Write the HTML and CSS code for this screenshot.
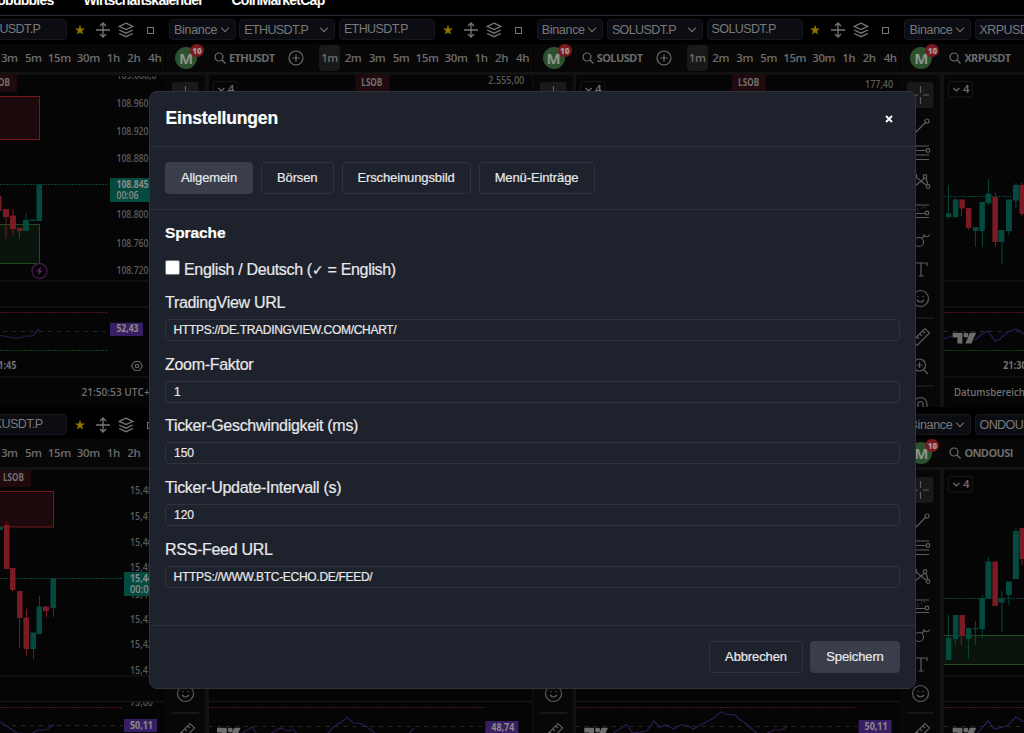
FILE: index.html
```html
<!DOCTYPE html>
<html lang="de">
<head>
<meta charset="utf-8">
<title>Einstellungen</title>
<link rel="stylesheet" href="styles.css">
</head>
<body>
<svg class="defs" width="0" height="0" aria-hidden="true">
  <symbol id="move" viewBox="0 0 16 16"><path d="M8 1v14M1 8h14M5 4l3-3 3 3M5 12l3 3 3-3" /></symbol>
  <symbol id="layers" viewBox="0 0 16 16"><path d="M8 1.200l6.800 3.200L8 7.600 1.200 4.400zM1.200 8L8 11.200l6.800-3.200M1.200 11.500L8 14.700l6.800-3.200" /></symbol>
  <symbol id="star" viewBox="0 0 12 12"><path d="M6 .8l1.300 3.600 3.700.1-2.900 2.300 1 3.700L6 8.400l-3.100 2.100 1-3.700L1 4.500l3.700-.1z" /></symbol>
  <symbol id="search" viewBox="0 0 12 12"><circle cx="5" cy="5" r="4"/><path d="M8 8l3.500 3.500"/></symbol>
  <symbol id="plus" viewBox="0 0 16 16"><circle cx="8" cy="8" r="7"/><path d="M8 4.500v7M4.500 8h7"/></symbol>
  <symbol id="logo" viewBox="0 0 24 12"><path d="M0 0h10v11H5V5H0zM17.500 0h6.500l-5 11h-6z"/><circle cx="13.500" cy="2.500" r="2.500"/></symbol>
  <symbol id="tools" viewBox="0 0 40 332">
    <rect class="on" x="7" y="7" width="26.500" height="26" rx="3"/>
    <path d="M20.500 11v7M20.500 22v7M12 20h6M23 20h6"/>
    <path d="M13 60l12.500-12.500"/><circle cx="27" cy="46.500" r="2" transform="translate(0 -.5)"/>
    <path d="M12 71h17M12 75.500h14M12 80h17M12 84.500h17"/><circle cx="28" cy="75.500" r="1.800"/>
    <path d="M16 102l10 8M25 103l-10 8M26 103l2 7M15 103l-1 7"/><circle cx="15" cy="101" r="1.800"/><circle cx="25" cy="101.500" r="1.800"/><circle cx="28" cy="111.500" r="1.800"/><circle cx="13.500" cy="111.500" r="1.800"/>
    <path d="M12 130h17M12 138.500h13M12 142.500h17M17 134h1M21 133h1M24 132h1M18 136h1"/><circle cx="27" cy="138" r="1.800"/>
    <circle cx="19" cy="167" r="4.500"/><path d="M22 163.500c1-1 2-2 2-4 1 3 4 3 6 0"/>
    <path d="M15 191v-3h12v3M21 188v13M18.500 201h5"/>
    <circle cx="20.500" cy="223.500" r="8"/><path d="M17 225q3.500 4 7 0M18 221v1M23 221v1"/>
    <path class="rule" d="M7 243h27"/>
    <path d="M12.500 266L25 253.500l4.500 4.500L17 270.500zM20 259l2 2M23 256l2 2M17 262l2 2"/>
    <circle cx="19.500" cy="290" r="6"/><path d="M24 295l4 4M16.500 290h6M19.500 287v6"/>
    <path class="rule" d="M7 311h27"/>
    <path d="M14 337v-8a6 6 0 0 1 13 0v8M18 337v-8a2.500 2.500 0 0 1 5 0v8"/>
  </symbol>
</svg>

<nav class="topnav"><span class="n1">Cryptobubbles</span><span class="n2">Wirtschaftskalender</span><span class="n3">CoinMarketCap</span></nav>

<main class="workspace">
  <section class="panel">
    <div class="pick"><span class="sel ex">Binance</span><span class="sel sym">BTCUSDT.P</span><span class="inp">BTCUSDT.P</span><svg class="i-star"><use href="#star"/></svg><svg class="i-move"><use href="#move"/></svg><svg class="i-layers"><use href="#layers"/></svg><i class="sq"></i></div>
    <div class="bar"><span class="ava">M<b>10</b></span><svg class="i-search"><use href="#search"/></svg><strong>BTCUSDT</strong><svg class="i-plus"><use href="#plus"/></svg><span class="tf on">1m</span><span class="tf">2m</span><span class="tf">3m</span><span class="tf">5m</span><span class="tf w28">15m</span><span class="tf w30">30m</span><span class="tf w20">1h</span><span class="tf w21">2h</span><span class="tf w21">4h</span></div>
    <div class="body">
      <svg class="tools"><use href="#tools"/></svg>
      <svg class="chart" viewBox="-159 75 323.700 332">
        <path class="tag" d="M-17 75h34v15q0 2-2 2h-32z"/><text class="b" x="-11" y="86" textLength="21" lengthAdjust="spacingAndGlyphs">LSOB</text>
        <rect class="rbox" x="-60" y="96.500" width="99.500" height="43"/><rect class="gbox" x="-60" y="224.500" width="99.500" height="39"/>
        <path class="dot g" d="M-159 184.500H108"/>
        <path class="red" d="M-4 196h5.500v15H-4zM3 209h6v8H3zM5.500 217h1v22h-1zM10 215.500h6V229h-6zM12.500 209h1v26h-1zM17 228h5.500v3H17zM19 231h1v8h-1z"/>
        <path class="green" d="M23 220h6v11h-6zM25.500 213h1v8h-1zM30 219.500h5.500v1.500H30zM36.500 184.500h5.500v36.500h-5.500z"/>
        <circle class="bolt" cx="39.500" cy="271" r="7.500"/><path class="boltp" d="M41.500 266.500l-5.500 5h3l-1.500 4 5.500-5h-3z"/>
        <path class="rule" d="M-159 281H164M-159 307H164M-159 377H164"/>
        <text x="116.500" y="79" textLength="40" lengthAdjust="spacingAndGlyphs">109.000,0</text><rect class="mask" x="110" y="75" width="54" height="1"/>
        <text x="116.500" y="107.500" textLength="32" lengthAdjust="spacingAndGlyphs">108.960</text><text x="116.500" y="135" textLength="32" lengthAdjust="spacingAndGlyphs">108.920</text><text x="116.500" y="162.500" textLength="32" lengthAdjust="spacingAndGlyphs">108.880</text><text x="116.500" y="218.500" textLength="32" lengthAdjust="spacingAndGlyphs">108.800</text><text x="116.500" y="247" textLength="32" lengthAdjust="spacingAndGlyphs">108.760</text><text x="116.500" y="274.500" textLength="32" lengthAdjust="spacingAndGlyphs">108.720</text>
        <rect class="price" x="110" y="178" width="52" height="24"/><text class="b lt" x="116.500" y="188" textLength="32" lengthAdjust="spacingAndGlyphs">108.845</text><text class="lt" x="116.500" y="199" textLength="22" lengthAdjust="spacingAndGlyphs">00:06</text>
        <path class="dot r" d="M-159 312.500H108"/><path class="dash" d="M-159 331.500H108"/><path class="dot gr" d="M-159 350.500H108"/>
        <path class="osc" d="M-10 334l10 1.500 14 2.500h6l6-2h7l6-7"/>
        <rect class="purple" x="110" y="322.700" width="33" height="13.300"/><text class="b lt" x="116.500" y="332.500" textLength="22" lengthAdjust="spacingAndGlyphs">52,43</text>
        <text class="b" x="-7" y="369.500" textLength="23.500" lengthAdjust="spacingAndGlyphs">21:45</text><path class="hex" d="M134.500 361.500h5l3 4.500-3 4.500h-5l-3-4.500z"/><circle class="hex" cx="137" cy="366" r="1.700"/>
        <text class="b t11" x="81.500" y="396" textLength="74" lengthAdjust="spacingAndGlyphs">21:50:53 UTC+2</text>
      </svg>
    </div>
  </section>

  <section class="panel">
    <div class="pick"><span class="sel ex">Binance</span><span class="sel sym">ETHUSDT.P</span><span class="inp">ETHUSDT.P</span><svg class="i-star"><use href="#star"/></svg><svg class="i-move"><use href="#move"/></svg><svg class="i-layers"><use href="#layers"/></svg><i class="sq"></i></div>
    <div class="bar"><span class="ava">M<b>10</b></span><svg class="i-search"><use href="#search"/></svg><strong>ETHUSDT</strong><svg class="i-plus"><use href="#plus"/></svg><span class="tf on">1m</span><span class="tf">2m</span><span class="tf">3m</span><span class="tf">5m</span><span class="tf w28">15m</span><span class="tf w30">30m</span><span class="tf w20">1h</span><span class="tf w21">2h</span><span class="tf w21">4h</span></div>
    <div class="body">
      <svg class="tools"><use href="#tools"/></svg>
      <svg class="chart" viewBox="208.700 75 323.700 332">
        <rect class="cnt" x="213" y="81.500" width="24.500" height="15.500" rx="2"/><path class="chev" d="M218 88l3 3 3-3"/><text class="b t11" x="227.500" y="93">4</text>
        <path class="tag" d="M355 75h34v17h-34z"/><text class="b" x="361" y="86" textLength="21" lengthAdjust="spacingAndGlyphs">LSOB</text>
        <text x="488" y="84" textLength="36" lengthAdjust="spacingAndGlyphs">2.555,00</text>
      </svg>
    </div>
  </section>

  <section class="panel">
    <div class="pick"><span class="sel ex">Binance</span><span class="sel sym">SOLUSDT.P</span><span class="inp">SOLUSDT.P</span><svg class="i-star"><use href="#star"/></svg><svg class="i-move"><use href="#move"/></svg><svg class="i-layers"><use href="#layers"/></svg><i class="sq"></i></div>
    <div class="bar"><span class="ava">M<b>10</b></span><svg class="i-search"><use href="#search"/></svg><strong>SOLUSDT</strong><svg class="i-plus"><use href="#plus"/></svg><span class="tf on">1m</span><span class="tf">2m</span><span class="tf">3m</span><span class="tf">5m</span><span class="tf w28">15m</span><span class="tf w30">30m</span><span class="tf w20">1h</span><span class="tf w21">2h</span><span class="tf w21">4h</span></div>
    <div class="body">
      <svg class="tools"><use href="#tools"/></svg>
      <svg class="chart" viewBox="576.400 75 323.700 332">
        <rect class="cnt" x="581" y="81.500" width="24.500" height="15.500" rx="2"/><path class="chev" d="M586 88l3 3 3-3"/><text class="b t11" x="595.500" y="93">4</text>
        <path class="tag" d="M732 75h34v17h-34z"/><text class="b" x="738.500" y="86" textLength="21" lengthAdjust="spacingAndGlyphs">LSOB</text>
        <text x="865.500" y="88.500" textLength="28" lengthAdjust="spacingAndGlyphs">177,40</text>
      </svg>
    </div>
  </section>

  <section class="panel">
    <div class="pick"><span class="sel ex">Binance</span><span class="sel sym">XRPUSDT.P</span></div>
    <div class="bar"><span class="ava">M<b>10</b></span><svg class="i-search"><use href="#search"/></svg><strong>XRPUSDT</strong></div>
    <div class="body">
      <svg class="tools"><use href="#tools"/></svg>
      <svg class="chart" viewBox="944.100 75 323.700 332">
        <rect class="cnt" x="948.500" y="81.500" width="24" height="15.500" rx="2"/><path class="chev" d="M953.500 88l3 3 3-3"/><text class="b t11" x="963" y="93">4</text>
        <path class="dot g" d="M944 196.500h120"/>
        <path class="green" d="M946 213.500h5.500v3.500H946zM948 185h1v34h-1zM953 199.500h5.500V217H953zM955 198h1v20h-1zM973 227h5.500v4H973zM975 230h1v17h-1zM979.500 202h5.500v29h-5.500zM982 231h1v16h-1zM985.500 193.500h6v9.500h-6zM988 179h1v26h-1zM998.500 230h6v12h-6zM1001.500 242h1v22h-1zM1006 199.500h6v31.500h-6zM1008.500 231h1v4h-1zM1013 185h6v15.500h-6zM1015.500 183h1v25h-1z"/>
        <path class="red" d="M959.500 199.500h5.500v9h-5.500zM961 208h1v8h-1zM966 208h5.500v20H966zM968 228h1v2h-1zM992.500 197h5.500v45h-5.500zM995 193h1v54h-1zM1019.500 185h6v29h-6zM1021.500 182h1v34h-1z"/>
        <path class="rule" d="M944 281h120M944 307h120M944 377h120"/>
        <path class="dot r" d="M944 312.500h120"/><path class="dash" d="M944 331.500h120"/><path class="dot gr" d="M944 350.500h120"/>
        <path class="osc" d="M944 339l8-3M975 340l7-6 6-3 7 10 5-2 8-7 8-3 8 5"/>
        <use class="logo" href="#logo" x="952.500" y="332.500" width="24" height="12"/>
        <text class="b" x="1003" y="369.500" textLength="24" lengthAdjust="spacingAndGlyphs">21:30</text><text class="b t11" x="954" y="396" textLength="71" lengthAdjust="spacingAndGlyphs">Datumsbereich</text>
      </svg>
    </div>
  </section>

  <section class="panel">
    <div class="pick"><span class="sel ex">Binance</span><span class="sel sym">LINKUSDT.P</span><span class="inp">LINKUSDT.P</span><svg class="i-star"><use href="#star"/></svg><svg class="i-move"><use href="#move"/></svg><svg class="i-layers"><use href="#layers"/></svg><i class="sq"></i></div>
    <div class="bar"><span class="ava">M<b>10</b></span><svg class="i-search"><use href="#search"/></svg><strong>LINKUSDT</strong><svg class="i-plus"><use href="#plus"/></svg><span class="tf on">1m</span><span class="tf">2m</span><span class="tf">3m</span><span class="tf">5m</span><span class="tf w28">15m</span><span class="tf w30">30m</span><span class="tf w20">1h</span><span class="tf w21">2h</span></div>
    <div class="body">
      <svg class="tools"><use href="#tools"/></svg>
      <svg class="chart" viewBox="-159 470 323.700 332">
        <path class="tag" d="M-4 470h35v15q0 2-2 2H-4z"/><text class="b" x="3" y="481" textLength="21" lengthAdjust="spacingAndGlyphs">LSOB</text>
        <rect class="rbox" x="-60" y="491.500" width="113.500" height="35.500"/>
        <path class="dot g" d="M-159 578.500H123"/>
        <path class="red" d="M4 525h5.500v44H4zM6 521.500h1v6H6zM10 568h5.500v22H10zM12 590h1v1.500h-1zM17 591h5.500v27H17zM19 618h1v30h-1zM23.500 617.500H29V649h-5.500zM26 609h1v46.500h-1zM43 606.500h6v4.500h-6zM46 611h1v6h-1z"/>
        <path class="green" d="M-3 527h6v3h-6zM30.500 632.500h5.500V649h-5.500zM33 649h1v10h-1zM36.500 606.500H42V634h-5.500zM39 596h1v11h-1zM50.500 578.500h5.500V608h-5.500zM53 608h1v9h-1z"/>
        <text x="130" y="494.500" textLength="28" lengthAdjust="spacingAndGlyphs">15,480</text><text x="130" y="520" textLength="28" lengthAdjust="spacingAndGlyphs">15,470</text><text x="130" y="546" textLength="28" lengthAdjust="spacingAndGlyphs">15,460</text><text x="130" y="571" textLength="28" lengthAdjust="spacingAndGlyphs">15,450</text><text x="130" y="598" textLength="28" lengthAdjust="spacingAndGlyphs">15,440</text><text x="130" y="623" textLength="28" lengthAdjust="spacingAndGlyphs">15,430</text><text x="130" y="648.500" textLength="28" lengthAdjust="spacingAndGlyphs">15,420</text><text x="130" y="674.500" textLength="28" lengthAdjust="spacingAndGlyphs">15,410</text>
        <rect class="price" x="124" y="572" width="40" height="24"/><text class="b lt" x="130" y="582" textLength="28" lengthAdjust="spacingAndGlyphs">15,445</text><text class="lt" x="130" y="593" textLength="24" lengthAdjust="spacingAndGlyphs">00:06</text>
        <text x="130" y="706" textLength="23" lengthAdjust="spacingAndGlyphs">75,00</text><rect class="mask" x="125" y="695" width="38" height="6.500"/>
        <path class="rule" d="M-159 676H164M-159 701.500H164"/>
        <path class="dot r" d="M-159 707.500H123"/><path class="dash" d="M-159 725.500H123"/>
        <path class="osc" d="M-6 713l6 9 8 5 9 6 14 1 7-4h8l8-5"/>
        <rect class="purple" x="124" y="719" width="33" height="13"/><text class="b lt" x="130" y="729" textLength="23" lengthAdjust="spacingAndGlyphs">50,11</text>
      </svg>
    </div>
  </section>

  <section class="panel">
    <div class="pick"></div><div class="bar"></div>
    <div class="body">
      <svg class="tools"><use href="#tools"/></svg>
      <svg class="chart" viewBox="208.700 470 323.700 332">
        <path class="rule" d="M208 701.500h324"/><path class="dot r" d="M208 707.500h277"/><path class="dash" d="M208 726.500h277"/>
        <path class="osc" d="M241 734l11-7 5 8M268 735l12-7 7 3 6-1 5 5M326 735l7-8 5-3 9-6.500 6 5.500 8 .5 6 3.500 10 8M407 735l7-7"/>
        <use class="logo" href="#logo" x="216.500" y="727.500" width="24" height="12"/>
        <rect class="purple" x="485" y="721" width="33" height="13"/><text class="b lt" x="491" y="731" textLength="23" lengthAdjust="spacingAndGlyphs">48,74</text>
      </svg>
    </div>
  </section>

  <section class="panel">
    <div class="pick"></div><div class="bar"></div>
    <div class="body">
      <svg class="tools"><use href="#tools"/></svg>
      <svg class="chart" viewBox="576.400 470 323.700 332">
        <path class="rule" d="M576 701.500h324"/><path class="dot r" d="M576 707.500h282"/><path class="dash" d="M576 726.500h282"/>
        <path class="osc" d="M614 733l13-8.500 6 8.500 14-2 7.500-10 5.500 6 7-2 7 4 7-4h6l7 4 7-4 13-7 7-6 7 2.500h7l6 5.500 7 5 10 9M766 734l8-4h8l6-3.500"/>
        <use class="logo" href="#logo" x="584.500" y="727.500" width="24" height="12"/>
        <rect class="purple" x="859" y="720" width="33" height="13"/><text class="b lt" x="865" y="730" textLength="23" lengthAdjust="spacingAndGlyphs">50,11</text>
      </svg>
    </div>
  </section>

  <section class="panel">
    <div class="pick"><span class="sel ex">Binance</span><span class="sel sym">ONDOUSDT.P</span></div>
    <div class="bar"><span class="ava">M<b>10</b></span><svg class="i-search"><use href="#search"/></svg><strong>ONDOUSI</strong></div>
    <div class="body">
      <svg class="tools"><use href="#tools"/></svg>
      <svg class="chart" viewBox="944.100 470 323.700 332">
        <rect class="cnt" x="948.500" y="476.500" width="24" height="15.500" rx="2"/><path class="chev" d="M953.500 483l3 3 3-3"/><text class="b t11" x="963" y="488">4</text>
        <rect class="gbox" x="930" y="635.500" width="120" height="29"/>
        <path class="dot g" d="M944 598.500h120"/>
        <path class="green" d="M946 638h5.500v22H946zM948 615h1v24h-1zM953 615h5.500v24H953zM955 639h1v6h-1zM966 628h5.500v11H966zM968 639h1v20h-1zM973 628h5.500v1.200H973zM975 621h1v24h-1zM979.500 598h5.500v31h-5.500zM982 595h1v43h-1zM985.500 561.500h6V599h-6zM988 557h1v5h-1zM998.500 598.500h6v4h-6zM1001.500 591h1v41h-1zM1006 581.500h6V595h-6zM1008.500 595h1v10h-1zM1013 531h6v48h-6zM1015.500 528h1v3h-1z"/>
        <path class="red" d="M959.500 615h5.500v21h-5.500zM961 636h1v9h-1zM992.500 561.500h5.500V606h-5.500zM1019.500 528h6v31h-6zM1021.500 559h1v6h-1z"/>
        <path class="rule" d="M944 676h120M944 701.500h120"/><path class="dot r" d="M944 707.500h120"/><path class="dash" d="M944 726.500h120"/>
        <path class="osc" d="M976 735l12-14 7 8 12-3 9-9 8 5"/>
        <use class="logo" href="#logo" x="952.500" y="727.500" width="24" height="12"/>
      </svg>
    </div>
  </section>
</main>

<div class="modal" role="dialog" aria-label="Einstellungen">
  <header class="m-head"><h2>Einstellungen</h2><svg class="close" viewBox="0 0 8 8"><path d="M1 1l6 6M7 1L1 7"/></svg></header>
  <div class="tabs"><button class="btn fill w88">Allgemein</button><button class="btn w73">Börsen</button><button class="btn w130">Erscheinungsbild</button><button class="btn w116">Menü-Einträge</button></div>
  <div class="m-body">
    <h3>Sprache</h3>
    <label class="check"><i class="box"></i><span>English / Deutsch (<span class="tick">✓</span> = English)</span></label>
    <div class="field"><label>TradingView URL</label><div class="text">HTTPS://DE.TRADINGVIEW.COM/CHART/</div></div>
    <div class="field"><label>Zoom-Faktor</label><div class="text num">1</div></div>
    <div class="field"><label>Ticker-Geschwindigkeit (ms)</label><div class="text num">150</div></div>
    <div class="field"><label>Ticker-Update-Intervall (s)</label><div class="text num">120</div></div>
    <div class="field"><label>RSS-Feed URL</label><div class="text">HTTPS://WWW.BTC-ECHO.DE/FEED/</div></div>
  </div>
  <footer class="m-foot"><button class="btn w94">Abbrechen</button><button class="btn fill w90">Speichern</button></footer>
</div>
</body>
</html>
```
FILE: styles.css
```css
* { box-sizing: border-box; }
html, body { margin: 0; height: 733px; overflow: hidden; background: #000; }
body { font-family: "Liberation Sans", Arial, sans-serif; }
.defs { position: absolute; }

.topnav { height: 16px; border-bottom: 1px solid #2b283a; overflow: hidden; display: flex; color: #fff; font-weight: 700; font-size: 14px; line-height: 16px; white-space: nowrap; }
.topnav span { margin-top: -8px; letter-spacing: -.75px; }
.n1 { width: 53.500px; display: flex; justify-content: flex-end; }
.n2 { width: 118px; margin-left: 30px; }
.n3 { margin-left: 30px; }

.workspace { display: grid; grid-template-columns: repeat(4, 367.700px); grid-auto-rows: 395px; margin-left: -202.700px; }
.panel { overflow: hidden; background: #000; display: flex; flex-direction: column; }
.pick { flex: none; height: 28px; display: flex; align-items: center; padding: 0 0 1px 4px; color: #7a7a7a; font-size: 12.500px; }
.sel, .inp { height: 21px; border: 1px solid #17181f; border-radius: 4px; background: #0c0d12; line-height: 20px; padding-left: 4px; white-space: nowrap; flex: none; margin-right: 3.700px; }
.ex { width: 66.500px; letter-spacing: -.3px; }
.sym, .inp { width: 96px; letter-spacing: -.6px; }
.inp { line-height: 18px; }
.sel { display: flex; justify-content: space-between; }
.sel::after { content: ""; width: 5px; height: 5px; border: solid #777; border-width: 0 1.200px 1.200px 0; transform: rotate(45deg); margin: 5px 7px 0 0; }
.i-star { width: 12px; height: 12px; fill: #8c7400; margin-left: 3px; }
.i-move, .i-layers { width: 16px; height: 16px; fill: none; stroke: #777; stroke-width: 1.300; }
.i-move { margin-left: 9px; }
.i-layers { margin-left: 7px; }
.sq { width: 7px; height: 7px; border: 1px solid #777; margin-left: 13px; margin-top: 2px; }

.bar { flex: none; height: 28px; background: #070707; border-left: 1px solid #000; display: flex; align-items: center; color: #6c6c6c; font: 600 12px "Open Sans", "Noto Sans", sans-serif; }
.ava { width: 22px; height: 22px; border-radius: 50%; background: #2c512d; color: #8d958d; font-size: 15px; font-weight: 700; line-height: 22px; text-align: center; margin-left: 9px; position: relative; flex: none; }
.ava b { position: absolute; left: 15px; top: -3px; width: 14px; height: 13px; border-radius: 50%; background: #7c1820; color: #a79a9a; font-size: 8px; line-height: 13px; }
.i-search { width: 12px; height: 12px; margin-left: 17px; flex: none; }
.i-plus { width: 16px; height: 16px; margin-left: 14px; margin-right: 15px; flex: none; }
.i-search, .i-plus { fill: none; stroke: #6c6c6c; stroke-width: 1.200; }
.bar strong { font-size: 11px; width: 45px; margin-left: 3px; font-weight: 700; letter-spacing: -.6px; white-space: nowrap; }
.bar strong, .tf { padding-bottom: 1px; }
.tf { width: 24px; flex: none; text-align: center; font-size: 11.500px; letter-spacing: -.4px; }
.tf.on { width: 21px; height: 26px; line-height: 26px; border-radius: 4px; background: #191919; margin-right: 1px; }
.tf.w28 { width: 28px; }
.tf.w30 { width: 30px; }
.tf.w20 { width: 20px; }
.tf.w21 { width: 21px; }

.body { flex: none; height: 335px; border-top: 3px solid #121212; display: flex; gap: 3.500px; background: #121212; padding-right: 1px; }
.tools { width: 40px; height: 332px; flex: none; background: #070707; fill: none; stroke: #5c5c5c; stroke-width: 1.200; border-radius: 0 3px 0 0; }
#tools .on { fill: #191919; stroke: none; }
#tools .rule { stroke: #242424; }
.chart { width: 323.700px; height: 332px; flex: none; background: #050505; border-radius: 3px; font: 600 10.500px "Open Sans", "Noto Sans", sans-serif; }
.chart text { fill: #5b5b5b; }
.chart .b { font-weight: 700; fill: #707070; }
.chart .t11 { font-size: 11.500px; font-weight: 600; }
.chart .lt { fill: #8b8b8b; }
.chart .rule { stroke: #151515; stroke-width: 1.300; }
.tag { fill: #210a0d; }
.rbox { fill: #1c090c; stroke: #751820; }
.gbox { fill: #0b140c; stroke: #1d4d20; }
.red { fill: #7a1b23; }
.green { fill: #044a3f; }
.mask { fill: #050505; }
.price { fill: #044a3f; }
.purple { fill: #381e63; }
.dot { stroke-dasharray: 2 1; }
.dot.g { stroke: #07453b; }
.dot.r { stroke: #5c151b; }
.dot.gr { stroke: #17421a; }
.dash { stroke: #292929; stroke-dasharray: 4 5; }
.osc { fill: none; stroke: #2f1a54; stroke-width: 1.200; }
.bolt { fill: none; stroke: #451a4d; stroke-width: 1.300; }
.boltp { fill: #5a2463; }
.hex { fill: none; stroke: #606060; stroke-width: 1.200; }
.cnt { fill: #050505; stroke: #181818; }
.chev { fill: none; stroke: #6c6c6c; stroke-width: 1.200; }
.logo { fill: #6c6c6c; }

.modal { position: absolute; left: 149px; top: 91px; width: 767px; height: 598px; background: #1e222d; border: 1px solid #2f333e; border-radius: 8px; color: #e8e8ea; display: flex; flex-direction: column; -webkit-text-stroke: .2px currentColor; }
.m-head { height: 55px; border-bottom: 1px solid #2e323d; display: flex; align-items: center; justify-content: space-between; padding: 0 22.500px 2px 15.500px; }
h2 { margin: 0; font-size: 17.500px; color: #fff; letter-spacing: -.18px; }
.close { width: 8px; height: 8px; stroke: #fff; stroke-width: 1.800; margin-top: 1px; }
.tabs { height: 63px; border-bottom: 1px solid #2e323d; display: flex; align-items: center; gap: 8px; padding-left: 15px; }
.btn { height: 32px; padding: 0 0 2px; border: 1px solid #2f333e; border-radius: 4px; background: transparent; color: #e8e8ea; font: 13px "Liberation Sans", Arial, sans-serif; letter-spacing: -.12px; -webkit-text-stroke: .2px currentColor; }
.fill { background: #3a3e4a; border-color: #3a3e4a; }
.w88 { width: 88px; }
.w73 { width: 72.500px; }
.w130 { width: 129px; }
.w116 { width: 116px; }
.w94 { width: 94px; }
.w90 { width: 90px; }
.m-body { flex: 1; padding: 13px 15px 0; }
h3 { margin: 0; font-size: 15.500px; line-height: 20px; color: #fff; letter-spacing: -.1px; }
.check { display: flex; align-items: center; height: 20px; margin-top: 16px; font-size: 16px; letter-spacing: -.34px; gap: 4px; white-space: nowrap; }
.check span { padding-top: 1px; }
.tick { font-size: 14px; }
.box { width: 15px; height: 15px; background: #fff; border: 1px solid #767676; border-radius: 2px; margin-top: -3px; }
.field { height: 61.700px; padding-top: 13px; }
.field label { display: block; height: 20px; line-height: 21px; font-size: 16px; letter-spacing: -.3px; }
.text { height: 22px; margin-top: 7px; border: 1px solid #2f333e; border-radius: 4px; line-height: 20px; padding-left: 7.500px; font-size: 12px; letter-spacing: -.29px; }
.num { letter-spacing: 0; padding-left: 8px; }
.m-foot { height: 63px; border-top: 1px solid #2e323d; display: flex; align-items: center; justify-content: flex-end; gap: 7px; padding-right: 15px; }
```
